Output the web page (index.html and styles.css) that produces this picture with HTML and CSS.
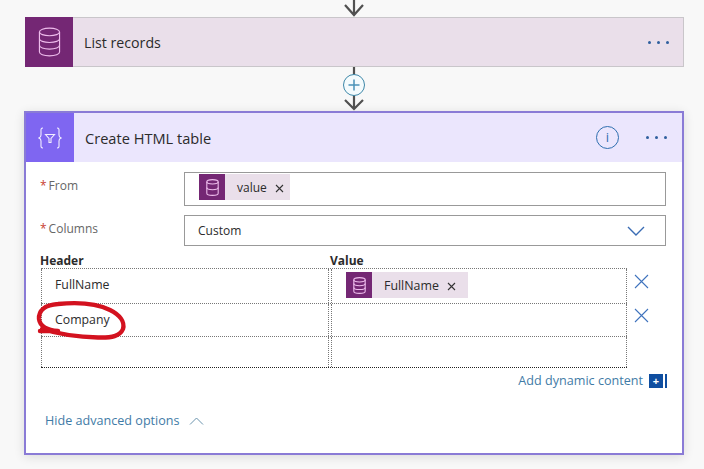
FILE: index.html
```html
<!DOCTYPE html>
<html lang="en">
<head>
  <meta charset="UTF-8" />
  <meta name="viewport" content="width=device-width, initial-scale=1.0" />
  <title>Create HTML table</title>
  <link rel="stylesheet" href="styles.css">
</head>
<body>
  <div class="flow">
    <svg class="arrow-top" width="24" height="17" viewBox="0 0 24 17">
      <path d="M12 0V15M3 5L12 15L21 5" fill="none" stroke="#505050" stroke-width="2.2"/>
    </svg>

    <div class="step step-list">
      <div class="step-icon">
        <svg width="23" height="30" viewBox="0 0 24 31" fill="none" stroke="#eebcec" stroke-width="1.2">
          <ellipse cx="12" cy="5" rx="10.5" ry="4"/>
          <path d="M1.5 5V26C1.5 28.2 6 30 12 30S22.5 28.2 22.5 26V5"/>
          <path d="M1.5 12C1.5 14.2 6 16 12 16S22.5 14.2 22.5 12"/>
          <path d="M1.5 19C1.5 21.2 6 23 12 23S22.5 21.2 22.5 19"/>
        </svg>
      </div>
      <div class="step-title">List records</div>
      <div class="dots"><i></i><i></i><i></i></div>
    </div>

    <svg class="connector" width="30" height="44" viewBox="0 0 30 44">
      <path d="M15 0V8M15 28V42M6 33L15 42L24 33" fill="none" stroke="#505050" stroke-width="2.2"/>
      <circle cx="15" cy="18" r="10.5" fill="#f4fbfd" stroke="#3d87a8" stroke-width="1"/>
      <path d="M15 12.5V23.5M9.5 18H20.5" fill="none" stroke="#4a93b8" stroke-width="1.5"/>
    </svg>

    <div class="step step-html">
      <div class="step-head">
        <div class="step-icon">
          <svg width="24" height="22" viewBox="0 0 24 22" fill="none" stroke="#f2eeff" stroke-width="1.1">
            <path d="M5 1C2.500 1 3 3 3 5V8C3 9.800 2.200 10.500 1 11C2.200 11.500 3 12.200 3 14V17C3 19 2.500 21 5 21"/>
            <path d="M19 1C21.500 1 21 3 21 5V8C21 9.800 21.800 10.500 23 11C21.800 11.500 21 12.200 21 14V17C21 19 21.500 21 19 21"/>
            <path d="M7.500 7.500H16.500L13 11.500V15.500H11V11.500Z"/>
          </svg>
        </div>
        <div class="step-title">Create HTML table</div>
        <div class="info">i</div>
        <div class="dots dots-html"><i></i><i></i><i></i></div>
      </div>

      <div class="step-body">
        <div class="field">
          <label class="field-label"><span class="req">*</span>From</label>
          <div class="input input-from">
            <span class="token">
              <span class="token-icon">
                <svg width="13" height="17" viewBox="0 0 24 31" fill="none" stroke="#eebcec" stroke-width="2">
                  <ellipse cx="12" cy="5" rx="10.500" ry="4"/>
                  <path d="M1.500 5V26C1.500 28.200 6 30 12 30S22.500 28.200 22.500 26V5"/>
                  <path d="M1.500 15.500C1.500 17.700 6 19.500 12 19.500S22.500 17.700 22.500 15.500"/>
                </svg>
              </span>
              <span class="token-text">value</span>
              <svg class="token-x" width="9" height="9" viewBox="0 0 9 9"><path d="M1 1L8 8M8 1L1 8" stroke="#333" stroke-width="1.100"/></svg>
            </span>
          </div>
        </div>

        <div class="field field-columns">
          <label class="field-label"><span class="req">*</span>Columns</label>
          <div class="input input-select">
            <span>Custom</span>
            <svg width="18" height="10" viewBox="0 0 18 10"><path d="M1 1L9 9L17 1" fill="none" stroke="#3a6cb4" stroke-width="1.400"/></svg>
          </div>
        </div>

        <div class="kv-head">
          <span class="kv-name">Header</span>
          <span>Value</span>
        </div>

        <div class="kv">
          <div class="kv-row kv-row-first">
            <div class="cell cell-text">FullName</div>
            <div class="cell cell-token">
              <span class="token token-wide">
                <span class="token-icon">
                  <svg width="13" height="17" viewBox="0 0 24 31" fill="none" stroke="#eebcec" stroke-width="2">
                    <ellipse cx="12" cy="5" rx="10.500" ry="4"/>
                    <path d="M1.500 5V26C1.500 28.200 6 30 12 30S22.500 28.200 22.500 26V5"/>
                    <path d="M1.500 12C1.500 14.200 6 16 12 16S22.500 14.200 22.500 12"/>
                    <path d="M1.500 19C1.500 21.200 6 23 12 23S22.500 21.200 22.500 19"/>
                  </svg>
                </span>
                <span class="token-text">FullName</span>
                <svg class="token-x" width="9" height="9" viewBox="0 0 9 9"><path d="M1 1L8 8M8 1L1 8" stroke="#333" stroke-width="1.100"/></svg>
              </span>
            </div>
            <svg class="row-x" width="15" height="15" viewBox="0 0 15 15"><path d="M1 1L14 14M14 1L1 14" stroke="#3f73bd" stroke-width="1.100"/></svg>
          </div>
          <div class="kv-row kv-row-second">
            <div class="cell cell-text">Company</div>
            <div class="cell"></div>
            <svg class="row-x" width="15" height="15" viewBox="0 0 15 15"><path d="M1 1L14 14M14 1L1 14" stroke="#3f73bd" stroke-width="1.100"/></svg>
          </div>
          <div class="kv-row kv-row-last">
            <div class="cell"></div>
            <div class="cell"></div>
          </div>
        </div>

        <div class="dynamic">
          <span>Add dynamic content</span>
          <span class="dynamic-icon"><b>+</b></span>
        </div>

        <div class="advanced">
          <span>Hide advanced options</span>
          <svg width="15" height="8" viewBox="0 0 15 8"><path d="M1 7.500L7.500 1L14 7.500" fill="none" stroke="#6b93ad" stroke-width="1"/></svg>
        </div>
      </div>
    </div>
  </div>

  <!-- marker scribble on top of the screenshot -->
  <svg class="scribble" width="704" height="469" viewBox="0 0 704 469">
    <path d="M40 331L58 331M58 331C46 330 40 326 39 319C38.500 311 44 305 58 304C78 302 98 304 110 310C120 315 125 322 123 329C120 336 112 338 98 337.500C78 337 58 334 42 329" fill="none" stroke="#d3121f" stroke-width="4.400" stroke-linecap="round"/>
  </svg>
</body>
</html>
```

FILE: styles.css
```css
:root {
  --bg: #f8f8f8;
  --purple: #742774;
  --purple-light: #eadfea;
  --violet: #7f66f1;
  --violet-light: #ebe6fd;
  --border-violet: #8a7bd6;
  --text: #2b2b2b;
  --muted: #666;
  --link: #3f7ba6;
  --line: #999;
}

html, body {
  margin: 0;
  height: 469px;
  overflow: hidden;
}

body {
  position: relative;
  background: var(--bg);
  color: var(--text);
  font-family: 'Open Sans', 'Noto Sans', Arial, sans-serif;
  font-size: 12px;
}

.flow {
  width: 660px;
  margin-left: 24px;
  display: flex;
  flex-direction: column;
  align-items: center;
}

.arrow-top, .connector {
  display: block;
  flex: none;
}

.step {
  align-self: stretch;
  box-sizing: border-box;
}

.step-list {
  height: 50px;
  display: flex;
  align-items: center;
  margin-left: 1px;
  background: var(--purple-light);
  border: 1px solid #c9c6ca;
  border-left: none;
}

.step-list .step-icon {
  width: 48px;
  height: 50px;
  margin-top: -1px;
  margin-bottom: -1px;
  background: var(--purple);
}

.step-icon {
  flex: none;
  display: flex;
  align-items: center;
  justify-content: center;
}

.step-title {
  flex: 1;
  margin-left: 11px;
  font-size: 14.2px;
}

.dots {
  display: flex;
  gap: 6px;
  margin-right: 14px;
}

.dots i {
  width: 3px;
  height: 3px;
  border-radius: 50%;
  background: #2f5f9e;
}

.step-html {
  height: 344px;
  background: #fff;
  border: 2px solid var(--border-violet);
  box-shadow: 0 2px 10px #0000001f;
}

.step-head {
  height: 49px;
  display: flex;
  align-items: center;
  background: var(--violet-light);
}

.step-head .step-icon {
  width: 48px;
  height: 49px;
  background: var(--violet);
}

.step-head .step-title {
  margin-left: 11px;
  font-size: 14.6px;
}

.info {
  width: 23px;
  height: 23px;
  margin-right: 27px;
  box-sizing: border-box;
  border: 1.5px solid #2f6fb0;
  border-radius: 50%;
  color: #2f6fb0;
  text-align: center;
  font-size: 13px;
  line-height: 20px;
}

.dots-html {
  margin-right: 15px;
}

.step-body {
  padding: 10px 16px 0 14px;
}

.field {
  display: flex;
  align-items: flex-start;
}

.field-columns {
  margin-top: 9px;
}

.field-label {
  flex: none;
  width: 144px;
  padding-top: 5px;
  color: var(--muted);
}

.req {
  color: #c8412f;
  margin-right: 2px;
}

.input {
  flex: 1;
  box-sizing: border-box;
  border: 1px solid var(--line);
  background: #fff;
}

.input-from {
  height: 34px;
  padding: 1px 14px;
}

.input-select {
  height: 31px;
  padding: 0 20px 0 13px;
  display: flex;
  align-items: center;
  justify-content: space-between;
}

.token {
  display: inline-flex;
  align-items: center;
  height: 26px;
  background: var(--purple-light);
  font-size: 12px;
}

.token-icon {
  width: 26px;
  height: 26px;
  display: flex;
  align-items: center;
  justify-content: center;
  background: var(--purple);
}

.token-text {
  margin-left: 12px;
}

.token-x {
  margin: 2px 6px 0 8px;
}

.token-wide {
  padding-right: 6px;
  font-size: 12.4px;
}

.kv-head {
  display: flex;
  margin-top: 7px;
  height: 15px;
  line-height: 15px;
  font-weight: 700;
}

.kv-name {
  width: 290px;
}

.kv {
  width: 586px;
  margin-left: 1px;
}

.kv-row {
  position: relative;
  display: grid;
  grid-template-columns: 288px 296px;
  gap: 2px;
  box-sizing: border-box;
  border-bottom: 1px dotted #777;
}

.kv-row-first {
  height: 36px;
  border-top: 1px dotted #777;
}

.kv-row-second {
  height: 33px;
}

.kv-row-last {
  height: 31px;
  border-bottom-color: #222;
}

.cell {
  border-left: 1px dotted #777;
  border-right: 1px dotted #777;
}

.cell-text {
  padding-left: 13px;
  line-height: 31px;
  font-size: 12.3px;
}

.cell-token {
  padding: 3px 0 0 14px;
}

.row-x {
  position: absolute;
  left: 593px;
  top: 5px;
}

.kv-row-second .row-x {
  top: 4px;
}

.dynamic {
  width: 627px;
  margin-top: 4px;
  display: flex;
  justify-content: flex-end;
  align-items: center;
  gap: 6px;
  color: var(--link);
  font-size: 12.6px;
}

.dynamic-icon {
  width: 18px;
  height: 14px;
  box-sizing: border-box;
  border-right: 2px solid #0f4ea0;
  background: linear-gradient(to right, #0f4ea0 14px, #fff 14px);
  color: #fff;
  line-height: 13px;
  font-size: 11px;
}

.dynamic-icon b {
  display: block;
  width: 14px;
  text-align: center;
}

.advanced {
  margin-top: 23px;
  margin-left: 5px;
  display: flex;
  align-items: center;
  gap: 9px;
  color: var(--link);
  font-size: 12.6px;
}

.scribble {
  position: absolute;
  left: 0;
  top: 0;
  pointer-events: none;
}
```
